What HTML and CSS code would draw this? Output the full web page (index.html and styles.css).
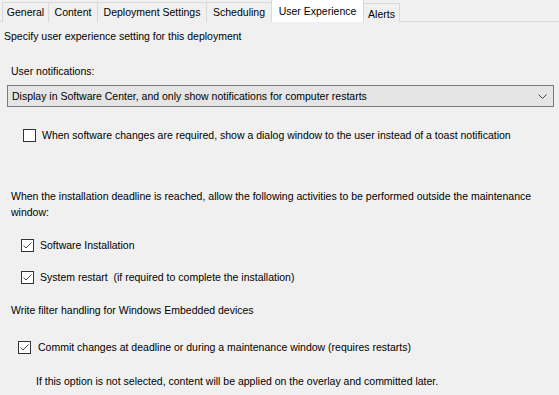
FILE: index.html
```html
<!DOCTYPE html>
<html lang="en">
<head>
    <meta charset="UTF-8">
    <title>Deployment Properties - User Experience</title>
    <link rel="stylesheet" href="styles.css">
</head>
<body>
    <div class="tabs">
        <div class="tab tab-general">General</div>
        <div class="tab tab-content">Content</div>
        <div class="tab tab-deploy">Deployment Settings</div>
        <div class="tab tab-schedule">Scheduling</div>
        <div class="tab tab-ux active">User Experience</div>
        <div class="tab tab-alerts">Alerts</div>
    </div>

    <div class="panel">
        <div class="line intro">Specify user experience setting for this deployment</div>

        <div class="line notif-label">User notifications:</div>
        <div class="dropdown">
            <span>Display in Software Center, and only show notifications for computer restarts</span>
            <svg class="chevron" width="9" height="5" viewBox="0 0 9 5">
                <polyline points="0.5,0.5 4.5,4.5 8.5,0.5" fill="none" stroke="#444" stroke-width="1"/>
            </svg>
        </div>

        <label class="check-row dialog-row">
            <span class="box"></span>
            When software changes are required, show a dialog window to the user instead of a toast notification
        </label>

        <div class="deadline">When the installation deadline is reached, allow the following activities to be performed outside the maintenance window:</div>

        <label class="check-row install-row">
            <span class="box">
                <svg width="11" height="11" viewBox="0 0 11 11"><polyline points="1.5,5.5 4,8 9.5,2.5" fill="none" stroke="#444" stroke-width="1"/></svg>
            </span>
            Software Installation
        </label>

        <label class="check-row restart-row">
            <span class="box">
                <svg width="11" height="11" viewBox="0 0 11 11"><polyline points="1.5,5.5 4,8 9.5,2.5" fill="none" stroke="#444" stroke-width="1"/></svg>
            </span>
            System restart&nbsp; (if required to complete the installation)
        </label>

        <div class="line filter-label">Write filter handling for Windows Embedded devices</div>

        <label class="check-row commit-row">
            <span class="box">
                <svg width="11" height="11" viewBox="0 0 11 11"><polyline points="1.5,5.5 4,8 9.5,2.5" fill="none" stroke="#444" stroke-width="1"/></svg>
            </span>
            Commit changes at deadline or during a maintenance window (requires restarts)
        </label>

        <div class="line note">If this option is not selected, content will be applied on the overlay and committed later.</div>
    </div>
</body>
</html>
```

FILE: styles.css
```css
* {
    margin: 0;
    padding: 0;
    box-sizing: border-box;
}

body {
    background: #f0f0f0;
    color: #000;
    font-family: "Liberation Sans", Arial, sans-serif;
    font-size: 10.5px;
    width: 559px;
    height: 395px;
    overflow: hidden;
}

/* onglets */
.tabs {
    display: flex;
    align-items: flex-end;
    height: 22px;
    padding-left: 2px;
    border-bottom: 1px solid #d9d9d9;
}

.tab {
    height: 20px;
    line-height: 19px;
    text-align: center;
    background: #f0f0f0;
    border: 1px solid #d9d9d9;
    border-bottom: none;
    margin-left: -1px;
    margin-bottom: -1px;
}

.tab-general { width: 47px; margin-left: 0; }
.tab-content { width: 50px; }
.tab-deploy { width: 110px; }
.tab-schedule { width: 66px; }
.tab-alerts { width: 37px; height: 19px; line-height: 20px; }

.tab.active {
    width: 93px;
    height: 23px;
    line-height: 22px;
    background: #fff;
    position: relative;
    z-index: 1;
}

/* contenu */
.panel {
    display: flex;
    flex-direction: column;
    align-items: flex-start;
}

.line {
    line-height: 16px;
    white-space: nowrap;
}

.intro { margin: 6px 0 0 4px; }
.notif-label { margin: 19px 0 0 11px; }

.dropdown {
    display: flex;
    align-items: center;
    justify-content: space-between;
    margin: 6px 0 0 7px;
    width: 547px;
    height: 22px;
    padding: 0 6px 0 4px;
    background: #e5e5e5;
    border: 1px solid #7a7a7a;
}

.check-row {
    display: flex;
    align-items: center;
    gap: 6px;
    line-height: 16px;
    white-space: nowrap;
}

.box {
    display: flex;
    align-items: center;
    justify-content: center;
    width: 13px;
    height: 13px;
    background: #fff;
    border: 1px solid #333;
}

.dialog-row { margin: 20px 0 0 23px; }

.deadline {
    margin: 45px 0 0 11px;
    width: 545px;
    line-height: 16px;
}

.install-row { margin: 17px 0 0 21px; }
.restart-row { margin: 16px 0 0 21px; }
.filter-label { margin: 17px 0 0 11px; }
.commit-row { margin: 21px 0 0 18px; gap: 7px; }
.note { margin: 18px 0 0 36px; }
```
